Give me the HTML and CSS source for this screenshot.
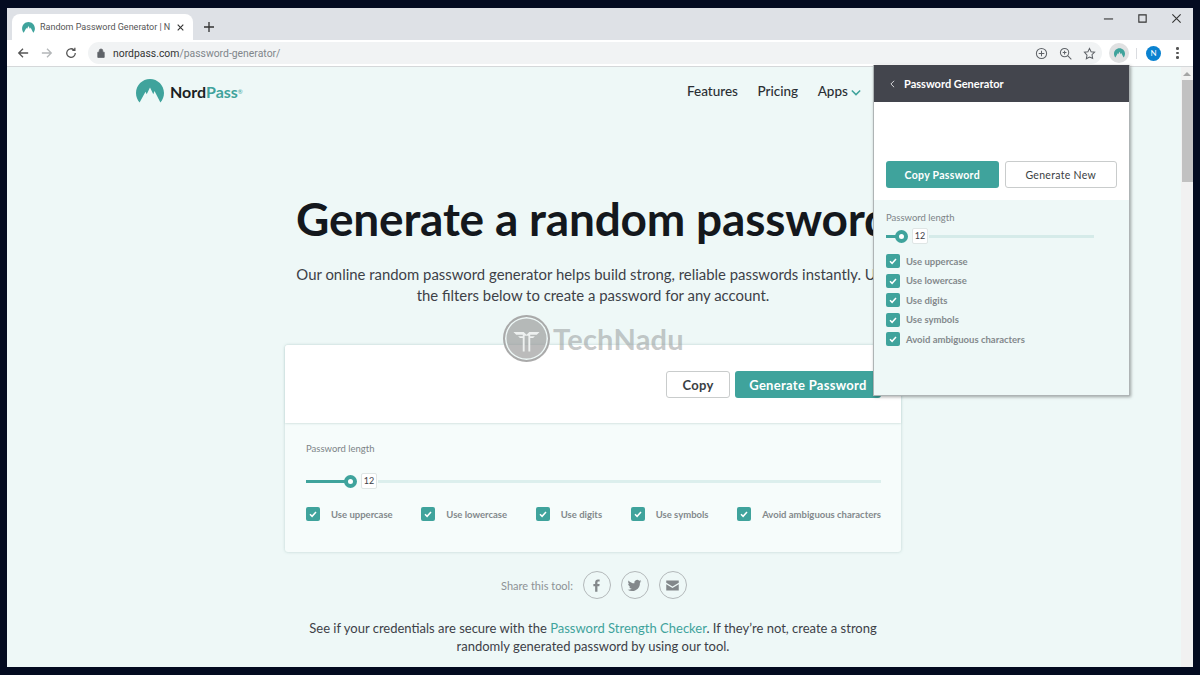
FILE: index.html
```html
<!DOCTYPE html>
<html lang="en">
<head>
    <meta charset="UTF-8">
    <title>Random Password Generator | NordPass</title>
    <link rel="stylesheet" href="styles.css">
</head>
<body>
<div class="window">
    <!-- tab strip -->
    <div class="tabstrip">
        <div class="tab">
            <svg class="favicon" viewBox="0 0 28 24"><path class="nord-mark" d="M3.6 23.5C1.3 20.9 0 17.6 0 14 0 6.3 6.3 0 14 0s14 6.3 14 14c0 3.6-1.300 6.900-3.600 9.500L18.5 12l-1.200 3.200L14 8.500 10.700 15.200 9.500 12.800z"/></svg>
            <span class="tab-title">Random Password Generator | N</span>
            <svg class="tab-close" viewBox="0 0 10 10"><path d="M1 1l8 8M9 1l-8 8"/></svg>
        </div>
        <svg class="new-tab" viewBox="0 0 12 12"><path d="M6 0v12M0 6h12"/></svg>
        <div class="win-controls">
            <svg viewBox="0 0 12 12"><path d="M1 6.500h10"/></svg>
            <svg viewBox="0 0 12 12"><path d="M2 2h8v8H2z"/></svg>
            <svg viewBox="0 0 12 12"><path d="M1.500 1.500l9 9M10.500 1.500l-9 9"/></svg>
        </div>
    </div>

    <!-- toolbar -->
    <div class="toolbar">
        <svg class="tool" viewBox="0 0 14 14"><path d="M13 7H2M7 2L2 7l5 5"/></svg>
        <svg class="tool tool-off" viewBox="0 0 14 14"><path d="M1 7h11M7 2l5 5-5 5"/></svg>
        <svg class="tool" viewBox="0 0 14 14"><path d="M12 7a5 5 0 1 1-1.500-3.500M11.500 1v3h-3"/></svg>
        <div class="omnibox">
            <svg class="lock" viewBox="0 0 10 12"><path d="M1 5h8v6.500H1zM2.800 5V3.200a2.200 2.200 0 0 1 4.400 0V5" /></svg>
            <span class="url">nordpass.com<span class="url-path">/password-generator/</span></span>
            <div class="omni-icons">
                <svg viewBox="0 0 14 14"><circle cx="7" cy="7" r="5.500"/><path d="M7 4v6M4 7h6"/></svg>
                <svg viewBox="0 0 14 14"><circle cx="6" cy="6" r="4.500"/><path d="M9.300 9.300l4 4M4 6h4M6 4v4"/></svg>
                <svg viewBox="0 0 14 14"><path d="M7 1.500l1.700 3.600 3.800.5-2.800 2.700.7 3.900L7 10.800l-3.400 1.900.7-3.900L1.500 5.600l3.800-.5z"/></svg>
            </div>
        </div>
        <div class="ext-btn">
            <svg viewBox="0 0 28 24"><path class="nord-mark" d="M3.600 23.500C1.300 20.900 0 17.600 0 14 0 6.300 6.300 0 14 0s14 6.300 14 14c0 3.600-1.300 6.900-3.600 9.500L18.500 12l-1.200 3.200L14 8.500 10.700 15.200 9.500 12.800z"/></svg>
        </div>
        <div class="tool-sep"></div>
        <div class="avatar">N</div>
        <div class="dots"><i></i><i></i><i></i></div>
    </div>

    <!-- page -->
    <div class="viewport">
        <div class="page">
            <nav class="nav">
                <div class="logo">
                    <svg viewBox="0 0 28 24"><path class="nord-mark" d="M3.600 23.500C1.300 20.900 0 17.600 0 14 0 6.300 6.300 0 14 0s14 6.300 14 14c0 3.600-1.300 6.900-3.600 9.500L18.500 12l-1.200 3.200L14 8.500 10.700 15.200 9.500 12.800z"/></svg>
                    <span class="logo-text">Nord<span class="logo-pass">Pass</span></span><sup class="logo-reg">®</sup>
                </div>
                <div class="nav-links">
                    <a>Features</a>
                    <a>Pricing</a>
                    <a>Apps <svg class="chev" viewBox="0 0 12 8"><path d="M1 1.500l5 5 5-5"/></svg></a>
                </div>
            </nav>

            <h1>Generate a random password</h1>
            <p class="lead">Our online random password generator helps build strong, reliable passwords instantly. Use<br>the filters below to create a password for any account.</p>

            <div class="card">
                <div class="card-top">
                    <button class="btn btn-outline">Copy</button>
                    <button class="btn btn-teal">Generate Password</button>
                </div>
                <div class="card-bottom">
                    <div class="label">Password length</div>
                    <div class="slider">
                        <div class="slider-fill"></div>
                        <div class="thumb"></div>
                        <div class="bubble">12</div>
                        <div class="slider-rest"></div>
                    </div>
                    <div class="checks">
                        <label class="check"><span class="box"><svg viewBox="0 0 10 10"><path d="M2 5.200l2.100 2.100L8 3"/></svg></span>Use uppercase</label>
                        <label class="check"><span class="box"><svg viewBox="0 0 10 10"><path d="M2 5.200l2.100 2.100L8 3"/></svg></span>Use lowercase</label>
                        <label class="check"><span class="box"><svg viewBox="0 0 10 10"><path d="M2 5.200l2.100 2.100L8 3"/></svg></span>Use digits</label>
                        <label class="check"><span class="box"><svg viewBox="0 0 10 10"><path d="M2 5.200l2.100 2.100L8 3"/></svg></span>Use symbols</label>
                        <label class="check"><span class="box"><svg viewBox="0 0 10 10"><path d="M2 5.200l2.100 2.100L8 3"/></svg></span>Avoid ambiguous characters</label>
                    </div>
                </div>
            </div>

            <div class="share">
                <span>Share this tool:</span>
                <a class="share-btn"><svg viewBox="0 0 24 24"><path d="M13.500 22v-9h3l.5-3.500h-3.500V7.300c0-1 .3-1.700 1.800-1.700H17V2.400c-.4 0-1.500-.1-2.700-.1-2.700 0-4.500 1.600-4.500 4.600v2.600H7V13h2.800v9z"/></svg></a>
                <a class="share-btn"><svg viewBox="0 0 24 24"><path d="M23 5.100c-.8.400-1.700.6-2.600.7.900-.6 1.600-1.400 2-2.500-.9.500-1.800.9-2.900 1.100A4.500 4.500 0 0 0 11.800 8.500C8.100 8.300 4.700 6.500 2.500 3.800c-1.200 2-.6 4.700 1.400 6-.7 0-1.400-.2-2-.6 0 2.200 1.500 4.100 3.600 4.500-.7.200-1.400.2-2 .1.600 1.800 2.200 3.100 4.200 3.100A9 9 0 0 1 1 18.800 12.800 12.800 0 0 0 20.700 7.400c.9-.6 1.700-1.400 2.300-2.300z"/></svg></a>
                <a class="share-btn"><svg viewBox="0 0 24 24"><path d="M2 4h20v3.500l-10 6-10-6zM2 10l10 6 10-6v10H2z"/></svg></a>
            </div>

            <p class="outro">See if your credentials are secure with the <a>Password Strength Checker</a>. If they’re not, create a strong<br>randomly generated password by using our tool.</p>
        </div>
        <div class="scrollbar">
            <div class="scroll-arrow"></div>
            <div class="scroll-thumb"></div>
        </div>
    </div>

    <!-- extension popup -->
    <div class="popup">
        <div class="popup-head">
            <svg class="popup-back" viewBox="0 0 6 10"><path d="M5 1L1 5l4 4"/></svg>
            <span>Password Generator</span>
        </div>
        <div class="popup-top">
            <button class="btn btn-teal btn-small">Copy Password</button>
            <button class="btn btn-outline btn-small btn-new">Generate New</button>
        </div>
        <div class="popup-body">
            <div class="label">Password length</div>
            <div class="mini-slider">
                <div class="mini-fill"></div>
                <div class="thumb"></div>
                <div class="bubble">12</div>
                <div class="mini-rest"></div>
            </div>
            <div class="popup-checks">
                <label class="check"><span class="box"><svg viewBox="0 0 10 10"><path d="M2 5.200l2.100 2.100L8 3"/></svg></span>Use uppercase</label>
                <label class="check"><span class="box"><svg viewBox="0 0 10 10"><path d="M2 5.200l2.100 2.100L8 3"/></svg></span>Use lowercase</label>
                <label class="check"><span class="box"><svg viewBox="0 0 10 10"><path d="M2 5.200l2.100 2.100L8 3"/></svg></span>Use digits</label>
                <label class="check"><span class="box"><svg viewBox="0 0 10 10"><path d="M2 5.200l2.100 2.100L8 3"/></svg></span>Use symbols</label>
                <label class="check"><span class="box"><svg viewBox="0 0 10 10"><path d="M2 5.200l2.100 2.100L8 3"/></svg></span>Avoid ambiguous characters</label>
            </div>
        </div>
    </div>

    <!-- watermark over the screenshot -->
    <div class="watermark">
        <div class="wm-circle">
            <svg viewBox="0 0 46 46"><path d="M9 16h11l3 3 3-3h11l-3 3h-7v1.500h5l-2 2h-3V37h-2V20h-4v17h-2V22.500h-3l-2-2h5V19h-7z"/></svg>
        </div>
        <span>TechNadu</span>
    </div>
</div>
</body>
</html>
```

FILE: styles.css
```css
* {
    box-sizing: border-box;
}
html, body {
    height: 100%;
    overflow: hidden;
}
body {
    margin: 0;
    padding: 8px 7px;
    background: #030b20;
    font-family: Lato, "Open Sans", Arial, sans-serif;
}
button {
    font-family: inherit;
}
.nord-mark {
    fill: #3fa39c;
}

.window {
    position: relative;
    height: 659px;
    display: flex;
    flex-direction: column;
    background: #eef8f7;
}

/* tab strip */
.tabstrip {
    height: 32px;
    flex: none;
    display: flex;
    align-items: flex-end;
    padding-left: 5px;
    background: #dee1e6;
}
.tab {
    width: 181px;
    height: 26px;
    display: flex;
    align-items: center;
    padding-left: 10px;
    background: #fff;
    border-radius: 8px 8px 0 0;
}
.favicon {
    width: 13px;
    height: 11px;
    flex: none;
}
.tab-title {
    width: 131px;
    margin-left: 5px;
    font-family: Roboto, sans-serif;
    font-size: 9px;
    color: #555;
    white-space: nowrap;
}
.tab-close {
    width: 7px;
    height: 7px;
    margin-left: 6px;
    fill: none;
    stroke: #333;
    stroke-width: 1.6;
}
.new-tab {
    width: 10px;
    height: 10px;
    margin: 0 0 8px 11px;
    fill: none;
    stroke: #333;
    stroke-width: 1.6;
}
.win-controls {
    margin-left: auto;
    align-self: flex-start;
    display: flex;
    gap: 23px;
    padding: 5px 11px 0 0;
}
.win-controls svg {
    width: 11px;
    height: 11px;
    fill: none;
    stroke: #333;
    stroke-width: 1.2;
}

/* toolbar */
.toolbar {
    height: 27px;
    flex: none;
    display: flex;
    align-items: center;
    padding: 0 0 0 10px;
    background: #fff;
    border-bottom: 1px solid #d5d8da;
}
.tool {
    width: 12px;
    height: 12px;
    margin-right: 12px;
    fill: none;
    stroke: #555;
    stroke-width: 1.5;
}
.tool-off {
    stroke: #b4b7b9;
}
.omnibox {
    width: 1014px;
    height: 22px;
    margin-left: -1px;
    display: flex;
    align-items: center;
    padding-left: 9px;
    background: #f1f3f4;
    border-radius: 11px;
}
.lock {
    width: 8px;
    height: 10px;
    fill: #5f6368;
    stroke: #5f6368;
    stroke-width: 1;
}
.url {
    margin-left: 8px;
    font-family: Roboto, sans-serif;
    font-size: 10.4px;
    color: #333;
}
.url-path {
    color: #80868b;
}
.omni-icons {
    margin-left: auto;
    display: flex;
    gap: 11px;
    padding-right: 6px;
}
.omni-icons svg {
    width: 13px;
    height: 13px;
    fill: none;
    stroke: #5f6368;
    stroke-width: 1.1;
}
.ext-btn {
    width: 20px;
    height: 20px;
    margin-left: 7px;
    display: flex;
    align-items: center;
    justify-content: center;
    background: #e0e1e2;
    border-radius: 50%;
}
.ext-btn svg {
    width: 11px;
    height: 10px;
}
.tool-sep {
    width: 1px;
    height: 11px;
    margin-left: 7px;
    background: #dadce0;
}
.avatar {
    width: 15px;
    height: 15px;
    margin-left: 9px;
    border-radius: 50%;
    background: #0a82d0;
    color: #fff;
    font-size: 8px;
    line-height: 15px;
    text-align: center;
}
.dots {
    margin-left: 15px;
    display: flex;
    flex-direction: column;
    gap: 2px;
}
.dots i {
    width: 2.5px;
    height: 2.5px;
    background: #555;
    border-radius: 50%;
}

/* page */
.viewport {
    flex: 1;
    min-height: 0;
    display: flex;
    overflow: hidden;
}
.page {
    flex: 1;
    min-width: 0;
    display: flex;
    flex-direction: column;
    align-items: center;
    padding-right: 2px;
    color: #3d4147;
    overflow: hidden;
}
.scrollbar {
    width: 12px;
    flex: none;
    background: #f1f1f1;
    display: flex;
    flex-direction: column;
    align-items: center;
    padding-top: 5px;
}
.scroll-arrow {
    width: 0;
    height: 0;
    border-left: 4px solid transparent;
    border-right: 4px solid transparent;
    border-bottom: 4px solid #a5a5a5;
}
.scroll-thumb {
    width: 11px;
    height: 102px;
    margin-top: 4px;
    background: #c1c1c1;
}

.nav {
    width: 914px;
    height: 46px;
    flex: none;
    display: flex;
    align-items: center;
    justify-content: space-between;
    padding-top: 2px;
}
.logo {
    display: flex;
    align-items: center;
}
.logo svg {
    width: 28px;
    height: 24px;
}
.logo-text {
    margin-left: 6px;
    font-size: 16px;
    font-weight: 700;
    color: #1b1f24;
}
.logo-pass {
    color: #3fa39c;
}
.logo-reg {
    font-size: 6px;
    color: #3fa39c;
}
.nav-links {
    display: flex;
    gap: 19.5px;
    width: 363px;
    font-size: 13.5px;
    font-weight: 500;
    color: #2a2e33;
}
.chev {
    width: 10px;
    height: 7px;
    fill: none;
    stroke: #3fa39c;
    stroke-width: 1.8;
}

h1 {
    margin: 76px 0 0;
    font-size: 46px;
    line-height: 60px;
    font-weight: 700;
    letter-spacing: -0.2px;
    color: #14181d;
    white-space: nowrap;
}
.lead {
    margin: 15px 0 0;
    font-size: 14.9px;
    line-height: 21px;
    text-align: center;
    white-space: nowrap;
    color: #3d4147;
}

.card {
    width: 616px;
    height: 207px;
    flex: none;
    margin-top: 39px;
    display: flex;
    flex-direction: column;
    background: #f6fcfb;
    border-radius: 3px;
    box-shadow: 0 0 3px rgba(90, 140, 135, 0.35);
}
.card-top {
    height: 78px;
    flex: none;
    display: flex;
    justify-content: flex-end;
    gap: 5px;
    padding: 26px 20px 0 0;
    background: #fff;
    border-radius: 3px 3px 0 0;
    box-shadow: 0 1px 2px rgba(90, 140, 135, 0.2);
}
.btn {
    height: 27px;
    padding: 0;
    border-radius: 3px;
    font-size: 13px;
    font-weight: 700;
    letter-spacing: 0.3px;
}
.btn-outline {
    width: 64px;
    background: #fff;
    border: 1px solid #c9cccc;
    color: #3a3e43;
}
.btn-teal {
    width: 146px;
    background: #3fa39c;
    border: none;
    color: #fff;
}
.card-bottom {
    flex: 1;
    padding: 20px 20px 0 21px;
}
.label {
    font-size: 9.5px;
    line-height: 12px;
    color: #7d8487;
}
.slider, .mini-slider {
    display: flex;
    align-items: center;
}
.slider {
    height: 16px;
    margin-top: 18px;
}
.slider-fill {
    width: 39px;
    height: 3px;
    background: #3fa39c;
}
.thumb {
    width: 13px;
    height: 13px;
    flex: none;
    margin-left: -1px;
    border-radius: 50%;
    border: 4px solid #3fa39c;
    background: #fff;
}
.bubble {
    position: relative;
    width: 16px;
    height: 16px;
    flex: none;
    margin-left: 4px;
    background: #fff;
    border: 1px solid #dfe6e5;
    border-radius: 2px;
    font-size: 9px;
    line-height: 14px;
    text-align: center;
    color: #3d4147;
}
.slider-rest {
    flex: 1;
    height: 3px;
    margin-left: 1px;
    background: #dcefed;
}
.checks {
    display: flex;
    justify-content: space-between;
    margin-top: 18px;
}
.check {
    display: flex;
    align-items: center;
    font-size: 9.5px;
    font-weight: 700;
    color: #83898c;
}
.box {
    width: 14px;
    height: 14px;
    flex: none;
    margin-right: 11px;
    display: flex;
    align-items: center;
    justify-content: center;
    background: #3fa39c;
    border-radius: 2px;
}
.box svg {
    width: 10px;
    height: 10px;
    fill: none;
    stroke: #fff;
    stroke-width: 1.5;
}

.share {
    margin-top: 19px;
    padding-left: 2px;
    display: flex;
    align-items: center;
    gap: 10px;
    font-size: 11px;
    color: #8d9295;
}
.share-btn {
    width: 28px;
    height: 28px;
    display: flex;
    align-items: center;
    justify-content: center;
    border: 1px solid #b3b8ba;
    border-radius: 50%;
}
.share-btn svg {
    width: 15px;
    height: 15px;
    fill: #83888b;
}
.outro {
    margin: 20px 0 0;
    font-size: 13px;
    line-height: 18px;
    text-align: center;
    white-space: nowrap;
}
.outro a {
    color: #3fa39c;
}

/* popup sits over the page, under the extension button */
.popup {
    position: absolute;
    left: 866px;
    top: 57px;
    width: 257px;
    height: 331px;
    display: flex;
    flex-direction: column;
    background: #fff;
    border: 1px solid #aeb4b5;
    border-top: none;
    box-shadow: 1px 1px 3px rgba(0, 0, 0, 0.35);
}
.popup-head {
    height: 37px;
    flex: none;
    display: flex;
    align-items: center;
    padding-left: 16px;
    background: #43454d;
    color: #fff;
    font-size: 11px;
    font-weight: 700;
}
.popup-back {
    width: 5px;
    height: 8px;
    margin-right: 9px;
    fill: none;
    stroke: #dcdde0;
    stroke-width: 1.2;
}
.popup-top {
    height: 98px;
    flex: none;
    display: flex;
    gap: 6px;
    padding: 59px 12px 0;
}
.btn-small {
    width: 113px;
    height: 27px;
    font-size: 10.5px;
}
.btn-new {
    font-weight: 400;
}
.popup-body {
    flex: 1;
    padding: 12px 12px 0;
    background: #eef8f7;
}
.mini-slider {
    width: 208px;
    height: 16px;
    margin-top: 4px;
}
.mini-fill {
    width: 10px;
    height: 3px;
    background: #3fa39c;
}
.mini-rest {
    flex: 1;
    height: 3px;
    margin-left: 1px;
    background: #d5ebe9;
}
.popup-checks {
    margin-top: 10px;
    display: flex;
    flex-direction: column;
    gap: 5.5px;
}
.popup-checks .box {
    margin-right: 6px;
}

/* watermark */
.watermark {
    position: absolute;
    left: 496px;
    top: 307px;
    display: flex;
    align-items: center;
    pointer-events: none;
}
.wm-circle {
    width: 47px;
    height: 47px;
    border-radius: 50%;
    border: 2px solid rgba(165, 165, 165, 0.75);
    background: rgba(150, 150, 150, 0.65);
    box-shadow: inset 0 0 0 1.5px #eef8f7;
}
.wm-circle svg {
    width: 100%;
    height: 100%;
    fill: #eef1f0;
}
.watermark span {
    margin-left: 3px;
    font-size: 29px;
    font-weight: 700;
    letter-spacing: 0.25px;
    color: rgba(150, 155, 155, 0.55);
}
```
